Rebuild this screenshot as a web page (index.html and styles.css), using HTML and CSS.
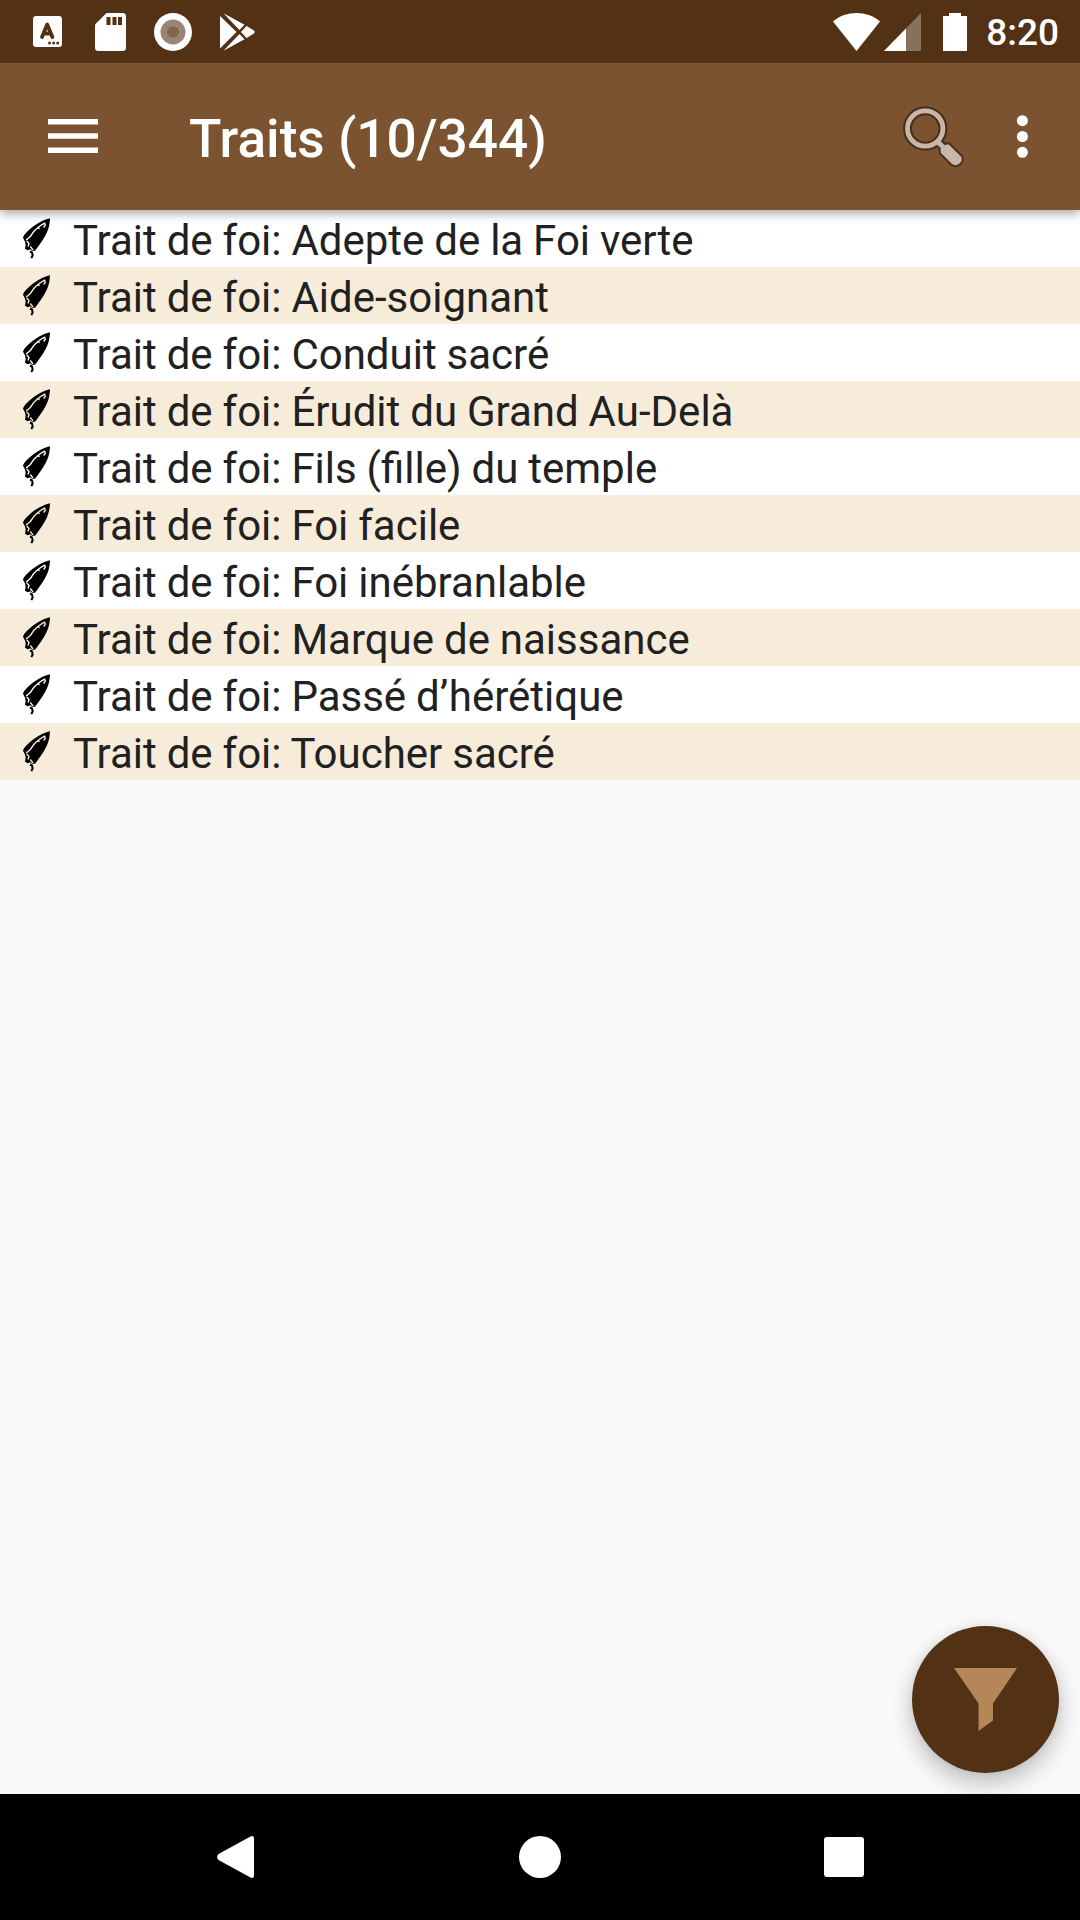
FILE: index.html
```html
<!DOCTYPE html>
<html lang="fr">
<head>
<meta charset="utf-8">
<title>Traits</title>
<link rel="stylesheet" href="styles.css">
</head>
<body>
<svg class="defs" aria-hidden="true">
  <symbol id="feather" viewBox="69 39 81 122">
    <path d="M150 39C128 44 104 58 86 75C76 84 69 93 69 98L75 109L77 119L75 131L83 135L92 132L96 137L105 137C113 126 124 112 131 100C142 82 149 65 150 39Z"/>
    <path class="vein" d="M78 104L83 101L91 94L102 78L113 68L125 59L134 54L136 60L131 67M113 68L119 70M80 107L87 115L84 124M91 124L99 134"/>
    <path class="drip" d="M90 139L96 142L98 151L94 159"/>
  </symbol>
</svg>
<div class="screen">
  <header class="status">
    <div class="group notifications">
      <svg width="29" height="31" viewBox="0 0 29 31"><rect width="29" height="31" rx="3" fill="#fff"/><path d="M9 21L14.2 8.500L19.400 21M10.700 17.500H17.700" fill="none" stroke="#533114" stroke-width="3.800" stroke-linecap="round" stroke-linejoin="round"/><g fill="#533114"><circle cx="16.500" cy="27" r="1.500"/><circle cx="20.600" cy="27" r="1.500"/><circle cx="24.700" cy="27" r="1.500"/></g></svg>
      <svg width="31" height="38" viewBox="0 0 31 38"><path d="M11.500 0H27.500Q31 0 31 3.500V34.500Q31 38 27.500 38H3.500Q0 38 0 34.500V11.500Z" fill="#fff"/><path d="M11.500 4h4v8h-4zM17.500 4h4v8h-4zM23 4h4v8h-4z" fill="#533114"/></svg>
      <svg width="38" height="38" viewBox="0 0 38 38"><circle cx="19" cy="19" r="19" fill="#fff"/><circle cx="19" cy="19" r="12.500" fill="#9b8572"/><circle cx="19" cy="19" r="5.800" fill="#7f654d"/></svg>
      <svg width="35" height="38" viewBox="0 0 35 38"><g fill="#fff"><path d="M0 3L16.500 19L0 35.500Z"/><path d="M3.500 .3L24.500 11.700L19.400 16.900Z"/><path d="M3.500 37.700L24.500 26.300L19.400 21.100Z"/><path d="M26.600 13L34 17.500Q35.200 19 34 20.500L26.600 25L20.900 19Z"/></g></svg>
    </div>
    <div class="group system">
      <svg width="47" height="38" viewBox="0 0 47 38"><path d="M0 8.500C13-2.800 34-2.800 47 8.500L23.500 38Z" fill="#fff"/></svg>
      <svg class="signal" width="37" height="38" viewBox="0 0 37 38"><path d="M37 0V38H0Z" fill="#88715c"/><path d="M22 15.400V38H0Z" fill="#fff"/></svg>
      <svg class="battery" width="24" height="38" viewBox="0 0 24 38"><path d="M6 0H18V3H24V38H0V3H6Z" fill="#fff"/></svg>
      <span class="clock">8:20</span>
    </div>
  </header>
  <div class="appbar">
    <svg class="menu" width="50" height="38" viewBox="0 0 50 38"><path d="M0 1h50v5.500H0zM0 15.200h50v5.500H0zM0 29.500h50v5.500H0z" fill="#fff"/></svg>
    <h1 class="title">Traits (10/344)</h1>
    <svg class="search" width="62" height="64" viewBox="0 0 62 64">
      <g fill="none" stroke="#49301b" stroke-linecap="round"><circle cx="22.200" cy="23.500" r="17.700" stroke-width="9"/><path d="M36 37.500L42 43.500" stroke-width="9"/></g>
      <path d="M42 40L45.500 39.300L58 51.500Q60 55 57 58L55 59.500Q52 61 49 59L38 48L37.500 44Z" fill="#c8b6a8" stroke="#49301b" stroke-width="4" stroke-linejoin="round" paint-order="stroke"/>
      <circle cx="22.200" cy="23.500" r="17.700" fill="none" stroke="#c8b6a8" stroke-width="4.800"/><path d="M34.500 36.500L43 45" stroke="#c8b6a8" stroke-width="5"/>
    </svg>
    <svg class="more" width="12" height="44" viewBox="0 0 12 44"><g fill="#fff"><circle cx="6.400" cy="5.700" r="5.500"/><circle cx="6.400" cy="21.500" r="5.500"/><circle cx="6.400" cy="37.300" r="5.500"/></g></svg>
  </div>
  <main class="content">
    <ul class="list">
      <li class="row"><svg class="feather"><use href="#feather"/></svg><span>Trait de foi: Adepte de la Foi verte</span></li>
      <li class="row"><svg class="feather"><use href="#feather"/></svg><span>Trait de foi: Aide-soignant</span></li>
      <li class="row"><svg class="feather"><use href="#feather"/></svg><span>Trait de foi: Conduit sacré</span></li>
      <li class="row"><svg class="feather"><use href="#feather"/></svg><span>Trait de foi: Érudit du Grand Au-Delà</span></li>
      <li class="row"><svg class="feather"><use href="#feather"/></svg><span>Trait de foi: Fils (fille) du temple</span></li>
      <li class="row"><svg class="feather"><use href="#feather"/></svg><span>Trait de foi: Foi facile</span></li>
      <li class="row"><svg class="feather"><use href="#feather"/></svg><span>Trait de foi: Foi inébranlable</span></li>
      <li class="row"><svg class="feather"><use href="#feather"/></svg><span>Trait de foi: Marque de naissance</span></li>
      <li class="row"><svg class="feather"><use href="#feather"/></svg><span>Trait de foi: Passé d’hérétique</span></li>
      <li class="row"><svg class="feather"><use href="#feather"/></svg><span>Trait de foi: Toucher sacré</span></li>
    </ul>
    <button class="fab" aria-label="Filtrer"><svg width="63" height="63" viewBox="0 0 63 63"><path d="M0 0H63L39 35.500V52.500L24.500 63V35.500Z" fill="#b58657"/></svg></button>
  </main>
  <nav class="navbar">
    <svg width="38" height="42" viewBox="0 0 38 42"><path d="M33.500 .5Q37 -1 37 3V39Q37 43 33.500 41.500L1.500 24Q-1.300 21 1.500 18Z" fill="#fff"/></svg>
    <svg width="42" height="42" viewBox="0 0 42 42"><circle cx="21" cy="21" r="21" fill="#fff"/></svg>
    <svg width="40" height="40" viewBox="0 0 40 40"><rect width="40" height="40" rx="3" fill="#fff"/></svg>
  </nav>
</div>
</body>
</html>
```
FILE: styles.css
```css
* { box-sizing: border-box; }
body { margin: 0; font-family: Roboto, sans-serif; }
svg { display: block; flex: none; }
.defs { position: absolute; width: 0; height: 0; }
.screen { width: 1080px; height: 1920px; display: flex; flex-direction: column; overflow: hidden; }
.status { height: 63px; flex: none; background: #533114; display: flex; justify-content: space-between; padding: 0 21px 0 33px; z-index: 2; }
.group { display: flex; align-items: center; }
.notifications { gap: 33px; }
.notifications svg:nth-child(3) { margin-left: -5px; }
.notifications svg:nth-child(4) { margin-left: -5px; }
.signal { margin-left: 4px; }
.battery { margin-left: 22px; }
.clock { margin-left: 19px; color: #fff; font-size: 37px; font-weight: 500; line-height: 64px; padding-top: 3px; }
.appbar { height: 147px; flex: none; background: #7b5330; display: flex; align-items: center; padding: 0 52px 0 48px; box-shadow: 0 3px 10px rgba(0, 0, 0, .38); z-index: 1; }
.title { flex: 1; margin: 0 0 0 91px; padding-top: 4px; color: #fff; font-size: 53.200px; font-weight: 500; line-height: 62px; }
.search { margin-right: 51px; }
.content { flex: 1; background: #fafafa; position: relative; }
.list { list-style: none; margin: 0; padding: 0; }
.row { height: 57px; display: flex; padding-left: 23px; background: #fff; color: #212121; font-size: 42px; line-height: 53px; }
.row span { margin-left: 23px; padding-top: 4px; white-space: pre; word-spacing: -.5px; }
.row:nth-child(even) { background: #f7ecda; }
.feather { width: 27px; height: 41px; margin-top: 8px; color: #fff; }
.row:nth-child(even) .feather { color: #f7ecda; }
.vein { fill: none; stroke: currentColor; stroke-width: 4; stroke-linejoin: round; }
.drip { fill: none; stroke: #000; stroke-width: 6; }
.fab { position: absolute; right: 21px; bottom: 21px; width: 147px; height: 147px; border: 0; border-radius: 50%; padding: 0; background: #533114; display: grid; place-items: center; box-shadow: 0 10px 24px rgba(0, 0, 0, .25), 0 0 8px rgba(0, 0, 0, .06); }
.navbar { height: 126px; flex: none; background: #000; display: flex; align-items: center; justify-content: space-between; padding: 0 216px 0 217px; z-index: 1; }
```
